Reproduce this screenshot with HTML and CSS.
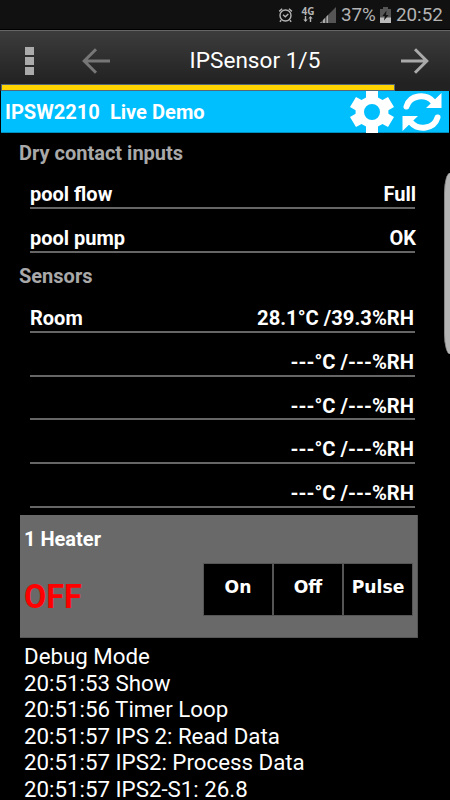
FILE: index.html
```html
<!DOCTYPE html>
<html lang="en">
	<head>
		<meta charset="utf-8">
		<title>IPSensor</title>
		<link rel="stylesheet" href="styles.css">
	</head>

	<body>
		<div class="status">
			<svg class="alarm" width="16" height="16" viewBox="0 0 16 16">
				<circle cx="7.500" cy="8.500" r="5.500"/>
				<path d="M1.200 4.400 4.200 1.800M13.900 4.400 10.900 1.800M3.200 13.200 1.900 14.800M11.900 13.200l1.300 1.600M5 7.800 7.300 9.800 10.300 7"/>
			</svg>
			<div class="network">
				<span>4G</span>
				<svg width="10" height="6" viewBox="0 0 10 6">
					<path d="M2.500 6 .3 3.500h1.500V0h1.400v3.500h1.500zM7.500 0l2.200 2.500H8.200V6H6.800V2.500H5.300z"/>
				</svg>
			</div>
			<svg class="signal" width="16" height="16" viewBox="0 0 16 16">
				<path fill="#555" d="M16 0v16H0z"/>
				<path fill="#aaa" d="M0 16l1.500-1.500V16zM3 16v-3l2-2v5zM6.500 16V9.500l1.500-1.500v8z"/>
			</svg>
			<span class="percent">37%</span>
			<svg class="battery" width="11" height="16" viewBox="0 0 11 16">
				<path fill="#555" d="M3 0h5v2h3v14H0V2h3z"/>
				<path fill="#bbb" d="M0 10.500h11V16H0z"/>
				<path fill="#111" d="M6.500 3.500 2.500 9h2.300L4 13.500 8.500 8H6z"/>
			</svg>
			<span class="clock">20:52</span>
		</div>

		<div class="toolbar">
			<div class="menu"><i></i><i></i><i></i></div>
			<svg class="arrow back" width="28" height="26" viewBox="0 0 28 26">
				<path d="M14 1.200 2.200 13 14 24.800M2.200 13H28"/>
			</svg>
			<h1>IPSensor 1/5</h1>
			<svg class="arrow next" width="28" height="26" viewBox="0 0 28 26">
				<path d="M14 1.200 25.800 13 14 24.800M25.800 13H0"/>
			</svg>
		</div>
		<div class="progress"><div class="bar"></div></div>

		<div class="device">
			<span class="name">IPSW2210&nbsp; Live Demo</span>
			<svg class="gear" width="44" height="42" viewBox="0 0 44 42">
				<path fill-rule="evenodd" d="M16 0h12v6.500l4.500 2.600 5.500-3.200 6 10.200-5.600 3.200v3.400l5.600 3.200-6 10.200-5.500-3.200L28 35.500V42H16v-6.500l-4.500-2.600L6 36.100 0 25.900l5.600-3.200v-3.400L0 16.100 6 5.900l5.500 3.200L16 6.500zM22 13a8 8 0 1 0 0 16 8 8 0 1 0 0-16z"/>
			</svg>
			<svg class="refresh" width="40" height="40" viewBox="0 0 40 40">
				<path class="ring" d="M4.500 14.500C8 2.500 24 1.500 31 9.500M35.500 25.500C32 37.500 16 38.500 9 30.500"/>
				<path d="M39.500 1v15H24zM.5 39V24H16z"/>
			</svg>
		</div>

		<div class="inputs">
			<h2>Dry contact inputs</h2>
			<div class="row"><span>pool flow</span><span class="contact">Full</span></div>
			<div class="row"><span>pool pump</span><span class="contact">OK</span></div>
		</div>
		<div class="sensors">
			<h2>Sensors</h2>
			<div class="row"><span>Room</span><span class="reading">28.1°C /39.3%RH</span></div>
			<div class="row"><span></span><span class="reading">---°C /---%RH</span></div>
			<div class="row"><span></span><span class="reading">---°C /---%RH</span></div>
			<div class="row"><span></span><span class="reading">---°C /---%RH</span></div>
			<div class="row"><span></span><span class="reading">---°C /---%RH</span></div>
		</div>

		<div class="output">
			<h3>1 Heater</h3>
			<div class="control">
				<span class="state">OFF</span>
				<button type="button">On</button>
				<button type="button">Off</button>
				<button type="button">Pulse</button>
			</div>
		</div>

		<div class="debug">
			<div>Debug Mode</div>
			<div>20:51:53 Show</div>
			<div>20:51:56 Timer Loop</div>
			<div>20:51:57 IPS 2: Read Data</div>
			<div>20:51:57 IPS2: Process Data</div>
			<div>20:51:57 IPS2-S1: 26.8</div>
		</div>

		<!-- edge panel handle, floats over the page -->
		<div class="handle"></div>
	</body>
</html>
```

FILE: styles.css
```css
* {
	box-sizing: border-box;
}

body {
	position: relative;
	margin: 0;
	height: 800px;
	overflow: hidden;
	background: #000;
	color: #fff;
	font-family: Roboto, sans-serif;
}

h1, h2, h3 {
	margin: 0;
}

/* status bar */
.status {
	display: flex;
	align-items: center;
	height: 30px;
	padding-left: 278px;
	background: #111;
	border-bottom: 1px solid #000;
	color: #b4b4b4;
	font-size: 18.8px;
	line-height: 31px;
}

.alarm {
	fill: none;
	stroke: #b4b4b4;
	stroke-width: 1.4;
}

.network {
	display: flex;
	flex-direction: column;
	align-items: center;
	width: 12px;
	margin-left: 8px;
	font: bold 10px/9px "Open Sans", sans-serif;
}

.network svg {
	fill: #b4b4b4;
}

.signal {
	margin-left: 6px;
}

.percent {
	width: 35px;
	margin-left: 5px;
	padding-top: 2px;
}

.battery {
	margin-left: 4px;
}

.clock {
	margin-left: 5px;
	padding-top: 2px;
}

/* toolbar */
.toolbar {
	display: flex;
	align-items: center;
	height: 54px;
	padding: 6px 21px 0 25px;
	border-top: 1px solid #666;
	background: linear-gradient(#3c3c3c, #222);
}

.menu {
	display: flex;
	flex-direction: column;
	gap: 2px;
	width: 9px;
}

.menu i {
	height: 8px;
	background: #aaa;
}

.arrow {
	fill: none;
	stroke: #aaa;
	stroke-width: 3;
}

.back {
	margin-left: 48px;
	stroke: #777;
}

.toolbar h1 {
	flex: 1;
	padding-right: 1px;
	font-size: 22.6px;
	font-weight: normal;
	text-align: center;
}

.progress {
	height: 7px;
	padding-left: 1px;
	background: #222;
}

.bar {
	width: 394px;
	height: 7px;
	border: 1px solid #567;
	background: #ffd400;
}

/* device header */
.device {
	display: flex;
	align-items: center;
	height: 42px;
	margin: 0 1px;
	padding-left: 4px;
	background: #00bfff;
	border-bottom: 1px solid #0090c0;
	font-size: 20.1px;
	font-weight: bold;
}

.name {
	width: 345px;
}

.gear {
	fill: #fff;
}

.refresh {
	margin-left: 8px;
	fill: #fff;
}

.ring {
	fill: none;
	stroke: #fff;
	stroke-width: 6;
	stroke-linecap: round;
}

/* readings */
h2 {
	height: 32px;
	padding-left: 19px;
	color: #a9a9a9;
	font-size: 20px;
	line-height: 40px;
}

.inputs {
	height: 120px;
}

.sensors {
	height: 262px;
}

.sensors h2 {
	height: 36px;
	line-height: 47px;
}

.row {
	display: flex;
	justify-content: space-between;
	height: 43.8px;
	margin: 0 35px 0 30px;
	border-bottom: 2px solid #666;
	font-size: 20px;
	font-weight: bold;
	line-height: 59px;
}

.contact {
	margin-right: -1px;
}

.reading {
	margin-right: 1px;
	font-size: 20.2px;
}

/* output panel */
.output {
	width: 398px;
	height: 123px;
	margin-left: 20px;
	padding: 12px 5px 0 4px;
	background: #696969;
	border: solid #555;
	border-width: 0 1px 1px 0;
}

h3 {
	height: 37px;
	font-size: 20px;
	line-height: 25px;
}

.control {
	display: flex;
	gap: 2px;
}

.state {
	flex: 1;
	color: #f00;
	font-size: 32.3px;
	font-weight: bold;
	line-height: 67px;
}

button {
	width: 68px;
	height: 51px;
	padding: 0 0 6px;
	border: 0;
	outline: 1px solid #555;
	background: #000;
	color: #fff;
	font: bold 17.2px "DejaVu Sans", sans-serif;
}

.debug {
	height: 162px;
	margin-top: -1px;
	padding: 6px 0 0 24px;
	font-size: 22.3px;
	line-height: 26.6px;
}

.handle {
	position: absolute;
	top: 173px;
	right: 0;
	width: 6px;
	height: 181px;
	border-left: 1px solid #888;
	border-radius: 6px 0 0 6px / 20px 0 0 20px;
	background: #b4b4b4;
}
```
